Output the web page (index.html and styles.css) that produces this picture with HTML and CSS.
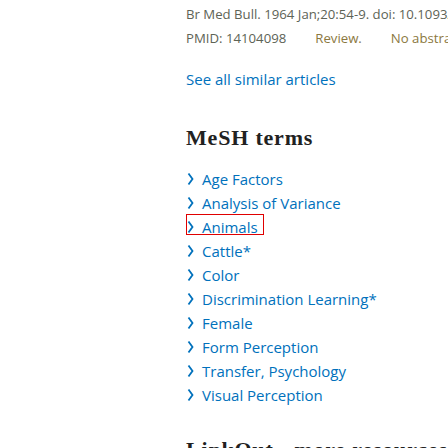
FILE: index.html
```html
<!DOCTYPE html>
<html lang="en">
<head>
<meta charset="utf-8">
<title>MeSH terms</title>
<link rel="stylesheet" href="styles.css">
</head>
<body>
<main class="page">
  <section class="similar">
    <div class="cit">Br Med Bull. 1964 Jan;20:54-9. doi: 10.1093/oxfordjournals.bmb.a070005.</div>
    <div class="meta"><span class="pmid">PMID: 14104098</span><span class="ptype">Review.</span><span class="noabs">No abstract available.</span></div>
    <a class="see-all" href="#">See all similar articles</a>
  </section>
  <section class="mesh">
    <h2 class="title">MeSH terms</h2>
    <ul class="terms">
      <li class="term"><span class="term-btn"><svg class="chev" viewBox="0 0 8 14" width="8" height="14"><polyline points="2.5,1.5 6.5,7 2.5,12.5"/></svg>Age Factors</span></li>
      <li class="term"><span class="term-btn"><svg class="chev" viewBox="0 0 8 14" width="8" height="14"><polyline points="2.5,1.5 6.5,7 2.5,12.5"/></svg>Analysis of Variance</span></li>
      <li class="term"><span class="term-btn is-focused"><svg class="chev" viewBox="0 0 8 14" width="8" height="14"><polyline points="2.5,1.5 6.5,7 2.5,12.5"/></svg>Animals</span></li>
      <li class="term"><span class="term-btn"><svg class="chev" viewBox="0 0 8 14" width="8" height="14"><polyline points="2.5,1.5 6.5,7 2.5,12.5"/></svg>Cattle*</span></li>
      <li class="term"><span class="term-btn"><svg class="chev" viewBox="0 0 8 14" width="8" height="14"><polyline points="2.5,1.5 6.5,7 2.5,12.5"/></svg>Color</span></li>
      <li class="term"><span class="term-btn"><svg class="chev" viewBox="0 0 8 14" width="8" height="14"><polyline points="2.5,1.5 6.5,7 2.5,12.5"/></svg>Discrimination Learning*</span></li>
      <li class="term"><span class="term-btn"><svg class="chev" viewBox="0 0 8 14" width="8" height="14"><polyline points="2.5,1.5 6.5,7 2.5,12.5"/></svg>Female</span></li>
      <li class="term"><span class="term-btn"><svg class="chev" viewBox="0 0 8 14" width="8" height="14"><polyline points="2.5,1.5 6.5,7 2.5,12.5"/></svg>Form Perception</span></li>
      <li class="term"><span class="term-btn"><svg class="chev" viewBox="0 0 8 14" width="8" height="14"><polyline points="2.5,1.5 6.5,7 2.5,12.5"/></svg>Transfer, Psychology</span></li>
      <li class="term"><span class="term-btn"><svg class="chev" viewBox="0 0 8 14" width="8" height="14"><polyline points="2.5,1.5 6.5,7 2.5,12.5"/></svg>Visual Perception</span></li>
    </ul>
  </section>
  <section class="linkout">
    <h2 class="title">LinkOut - more resources</h2>
  </section>
</main>
</body>
</html>
```
FILE: styles.css
```css
html, body {
  margin: 0;
  padding: 0;
  background: #ffffff;
  overflow: hidden;
}

.page {
  padding: 2px 0 0 186px;
  font-family: "Open Sans", "Noto Sans", sans-serif;
}

.cit,
.meta {
  font-size: 13.2px;
  line-height: 24px;
  white-space: nowrap;
  color: #5d6356;
}

.ptype,
.noabs {
  margin-left: 29px;
  color: #8b7840;
}

.see-all {
  display: block;
  margin-top: 17px;
  font-size: 15px;
  line-height: 24px;
  color: #0071bc;
  text-decoration: none;
}

.title {
  margin: 33px 0 0;
  font-family: "Liberation Serif", "Times New Roman", serif;
  font-weight: bold;
  font-size: 22px;
  line-height: 28px;
  letter-spacing: 0.8px;
  color: #212121;
}

.terms {
  list-style: none;
  margin: 15px 0 0;
  padding: 0;
}

.term {
  display: flex;
  height: 24px;
  font-size: 15px;
  line-height: 24px;
  color: #0071bc;
  white-space: nowrap;
}

.term-btn {
  position: relative;
  display: inline-flex;
  align-items: center;
}

.chev {
  flex: none;
  margin-right: 8px;
  fill: none;
  stroke: #0071bc;
  stroke-width: 1.8;
  stroke-linecap: butt;
  stroke-linejoin: miter;
}

.is-focused::after {
  content: "";
  position: absolute;
  left: 0;
  top: -1px;
  width: 78px;
  height: 21px;
  box-sizing: border-box;
  border: 1px solid #e00000;
}

.linkout .title {
  margin-top: 29px;
}
```
